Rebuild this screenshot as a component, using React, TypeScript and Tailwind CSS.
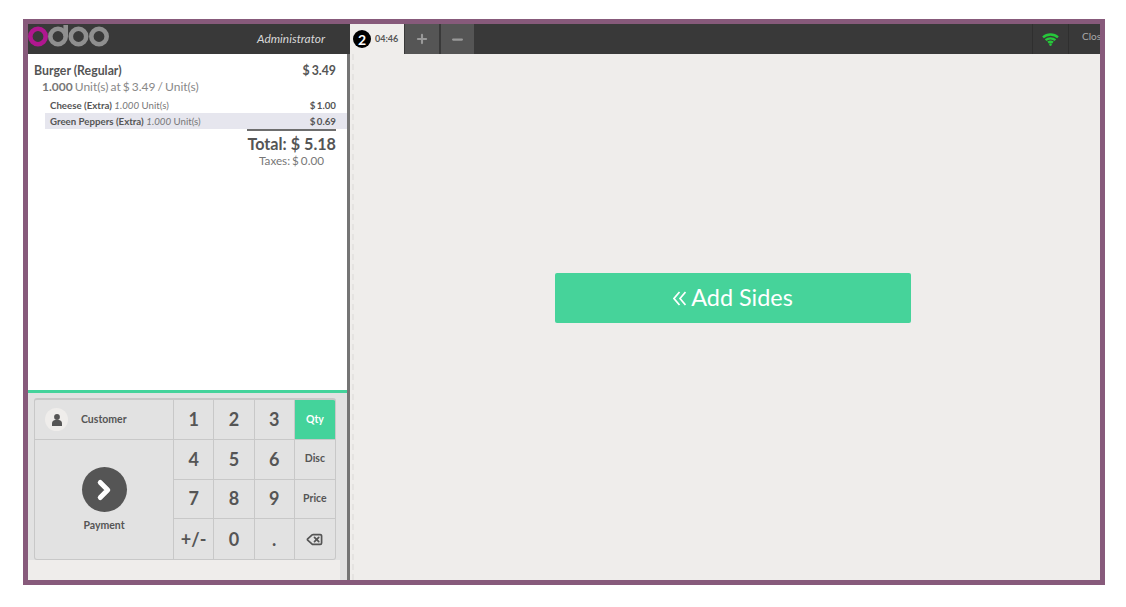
import React from 'react';
import { ChevronRight, Delete, Minus, Plus } from 'lucide-react';

const orderLines = [
  { name: 'Cheese (Extra)', price: '$ 1.00', selected: false },
  { name: 'Green Peppers (Extra)', price: '$ 0.69', selected: true },
];

const keys = [
  ['1', '2', '3', 'Qty'],
  ['4', '5', '6', 'Disc'],
  ['7', '8', '9', 'Price'],
  ['+/-', '0', '.', 'del'],
];

function Logo() {
  return (
    <svg width="84" height="30" viewBox="0 0 84 30" fill="none" strokeWidth="4.6">
      <circle cx="10" cy="12.5" r="7.7" stroke="#b0178f" />
      <circle cx="30" cy="12.5" r="7.7" stroke="#8f8f8f" />
      <path d="M37.7 1v11" stroke="#8f8f8f" />
      <circle cx="50.5" cy="12.5" r="7.7" stroke="#8f8f8f" />
      <circle cx="71" cy="12.5" r="7.7" stroke="#8f8f8f" />
    </svg>
  );
}

function Wifi() {
  return (
    <svg width="17" height="13" viewBox="0 0 17 13" fill="none" stroke="#26c93a" strokeWidth="2.4">
      <path d="M1 4.4C5.2.6 11.8.6 16 4.4" />
      <path d="M3.6 7.2c2.8-2.5 7-2.5 9.8 0" />
      <path d="M6 9.6c1.5-1 3.5-1 5 0" />
      <circle cx="8.5" cy="11.6" r="1.3" fill="#26c93a" stroke="none" />
    </svg>
  );
}

function Person() {
  return (
    <svg width="10" height="12" viewBox="0 0 10 12" fill="#555555">
      <circle cx="5" cy="3" r="2.9" />
      <path d="M0 12V9.2C0 7.4 1.5 6 3.2 6h3.6C8.5 6 10 7.4 10 9.2V12z" />
    </svg>
  );
}

function DoubleLeft() {
  return (
    <svg width="13" height="15" viewBox="0 0 13 15" fill="none" stroke="white" strokeWidth="1.7">
      <path d="M6.5 1 1 7.5 6.5 14" />
      <path d="M12.5 1 7 7.5 12.5 14" />
    </svg>
  );
}

export default function App() {
  return (
    <div className="h-[607px] w-[1126px] overflow-hidden bg-white pl-[23px] pt-[19px] font-['Lato',sans-serif] text-[#555555]">
      <div className="flex h-[566px] w-[1082px] flex-col border-[5px] border-[#875a7b] bg-[#efedeb]">
        {/* top bar */}
        <div className="flex h-[30px] shrink-0 bg-[#393939]">
          <div className="flex w-[322px] items-center justify-between pr-[25px]">
            <Logo />
            <span className="text-[11.9px] italic text-[#d8d8d8]">Administrator</span>
          </div>
          <div className="flex h-[30px] w-[54px] items-center bg-[#efedeb] pl-[3px]">
            <span className="flex h-[18px] w-[18px] items-center justify-center rounded-full bg-black text-[14px] font-bold text-white">2</span>
            <span className="ml-[4px] text-[9px] font-bold text-[#555555]">04:46</span>
          </div>
          <div className="ml-[1px] flex w-[34px] items-center justify-center bg-[#555555] text-[#999999]">
            <Plus size={14} strokeWidth={3.6} />
          </div>
          <div className="ml-[2px] flex w-[33px] items-center justify-center bg-[#555555] text-[#999999]">
            <Minus size={15} strokeWidth={3.6} />
          </div>
          <div className="flex-1" />
          <div className="flex w-[37px] items-center justify-center border-x border-[#2f2f2f]">
            <Wifi />
          </div>
          <div className="w-[31px] overflow-hidden pl-[13px] text-[10px] leading-[25px] text-[#aaaaaa]">Close</div>
        </div>

        <div className="flex min-h-0 flex-1">
          {/* order pane */}
          <div className="flex w-[322px] shrink-0 flex-col border-r-[3px] border-[#757575] bg-white">
            <div className="flex-1 pt-[9px]">
              <div className="flex justify-between pl-[6px] pr-[11px] text-[12.3px] font-bold leading-[16px]">
                <span>Burger (Regular)</span>
                <span className="[word-spacing:-1px]">$ 3.49</span>
              </div>
              <div className="pl-[14px] text-[12px] leading-[15px] text-[#888888] [word-spacing:-1px]">
                <span className="font-bold text-[#777777]">1.000</span> Unit(s) at $ 3.49 / Unit(s)
              </div>
              <div className="ml-[17px] mt-[3px]">
                {orderLines.map((line) => (
                  <div
                    key={line.name}
                    className={`flex h-[16px] items-center justify-between pl-[5px] pr-[11px] pt-[1px] text-[9.7px] ${line.selected ? 'bg-[#e6e6ee]' : ''}`}
                  >
                    <span>
                      <span className="font-bold">{line.name}</span> <i className="text-[#777777]">1.000</i>{' '}
                      <span className="text-[#777777]">Unit(s)</span>
                    </span>
                    <span className="font-bold [word-spacing:-1px]">{line.price}</span>
                  </div>
                ))}
              </div>
              <div className="ml-[219px] mr-[11px] border-t-2 border-[#6e6e6e] pt-[1px] text-center">
                <div className="text-right text-[16.2px] font-bold leading-[24px]">Total: $ 5.18</div>
                <div className="text-[11.7px] leading-[8px] text-[#777777] [word-spacing:-1px]">Taxes: $ 0.00</div>
              </div>
            </div>

            {/* pads */}
            <div className="h-[190px] border-t-[3px] border-[#44d39b] bg-[#e2e2e2]">
              <div className="ml-[6px] mt-[5px] flex h-[162px] w-[302px] overflow-hidden rounded-[3px] border border-t-2 border-[#c8c8c8]">
                <div className="flex w-[139px] flex-col border-r border-[#c8c8c8]">
                  <div className="flex h-[40px] items-center border-b border-[#c8c8c8] pl-[10px]">
                    <span className="flex h-[23px] w-[23px] items-center justify-center rounded-full bg-[#efedeb]">
                      <Person />
                    </span>
                    <span className="ml-[13px] text-[10.5px] font-bold">Customer</span>
                  </div>
                  <div className="flex flex-1 flex-col items-center justify-center pt-[2px]">
                    <span className="flex h-[45px] w-[45px] items-center justify-center rounded-full bg-[#555555] text-white">
                      <ChevronRight size={30} strokeWidth={4} />
                    </span>
                    <span className="mt-[6px] text-[10.5px] font-bold">Payment</span>
                  </div>
                </div>
                <div className="grid flex-1 grid-cols-4 grid-rows-4">
                  {keys.flat().map((key) => {
                    const isMode = ['Qty', 'Disc', 'Price', 'del'].includes(key);
                    return (
                      <div
                        key={key}
                        className={`flex items-center justify-center border-[#c8c8c8] ${key === 'del' || ['+/-', '0', '.'].includes(key) ? '' : 'border-b'} ${isMode ? '' : 'border-r'} ${key === 'Qty' ? 'bg-[#44d39b] text-white' : ''} ${isMode ? 'text-[10.5px] font-bold' : 'text-[18px] font-bold'}`}
                      >
                        {key === 'del' ? <Delete size={17} strokeWidth={2.4} /> : key}
                      </div>
                    );
                  })}
                </div>
              </div>
              <div className="h-[20px] w-[312px] bg-[#efedeb]" />
            </div>
          </div>

          {/* product pane */}
          <div className="ml-[2px] flex flex-1 items-center justify-center border-l-2 border-dashed border-[#e5e3e1] pb-[38px] pl-[12px]">
            <div className="flex h-[50px] w-[356px] items-center justify-center gap-[5px] rounded-[2px] bg-[#46d39a] text-[23.4px] text-white">
              <DoubleLeft />
              <span>Add Sides</span>
            </div>
          </div>
        </div>
      </div>
    </div>
  );
}
